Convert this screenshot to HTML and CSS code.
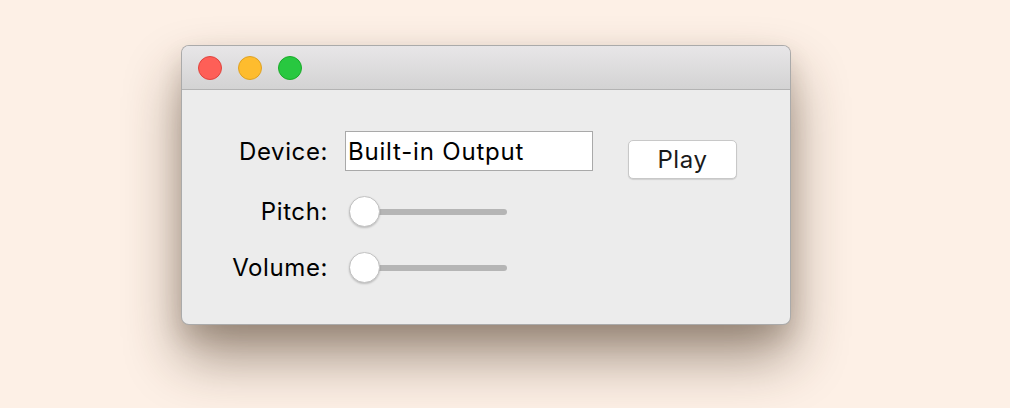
FILE: index.html
```html
<!DOCTYPE html>
<html>
<head>
<meta charset="utf-8">
<link rel="stylesheet" href="styles.css">
</head>
<body>
<div class="window">
  <div class="titlebar">
    <span class="light red"></span>
    <span class="light yellow"></span>
    <span class="light green"></span>
  </div>
  <div class="content">
    <div class="form">
      <label class="label">Device:</label>
      <div class="field">Built-in Output</div>
      <button class="btn">Play</button>
      <label class="label">Pitch:</label>
      <div class="slider"><span class="track"></span><span class="thumb"></span></div>
      <span></span>
      <label class="label">Volume:</label>
      <div class="slider"><span class="track"></span><span class="thumb"></span></div>
      <span></span>
    </div>
  </div>
</div>
</body>
</html>
```
FILE: styles.css
```css
html, body { margin: 0; padding: 0; }
body {
  background: #fdf0e6;
  width: 1010px;
  height: 408px;
  overflow: hidden;
  padding: 45px 0 0 181px;
  box-sizing: border-box;
  font-family: "Inter", "Roboto", "Liberation Sans", sans-serif;
}
.window {
  width: 610px;
  height: 280px;
  border-radius: 8px;
  background: #ececec;
  box-sizing: border-box;
  border: 1px solid rgba(0,0,0,0.28);
  box-shadow: 0 32px 55px rgba(60,40,20,0.48), 0 12px 25px rgba(60,40,20,0.14);
  overflow: hidden;
  display: flex;
  flex-direction: column;
}
.titlebar {
  height: 43px;
  flex: none;
  background: linear-gradient(#e8e6e8, #d3d3d3);
  border-bottom: 1px solid #b3b3b3;
  display: flex;
  align-items: center;
  gap: 16px;
  padding: 0 0 0 16px;
}
.light {
  width: 24px;
  height: 24px;
  border-radius: 50%;
  box-sizing: border-box;
}
.red { background: #fe5f57; border: 1px solid #e0443e; }
.yellow { background: #febc2e; border: 1px solid #dea123; }
.green { background: #28c840; border: 1px solid #1aab29; }
.content {
  padding: 41px 0 0 39px;
}
.form {
  display: grid;
  grid-template-columns: 106px 248px auto;
  column-gap: 18px;
  row-gap: 25px;
  align-items: center;
}
.label {
  justify-self: end;
  font-size: 24px;
  letter-spacing: 0.6px;
  margin-right: -1px;
  color: #000;
}
.field {
  height: 40px;
  box-sizing: border-box;
  background: #fff;
  border: 1px solid #a9a9a9;
  font-size: 24px;
  letter-spacing: 0.8px;
  line-height: 40px;
  padding-left: 2px;
  color: #000;
}
.btn {
  justify-self: start;
  margin: 8px 0 -8px 17px;
  width: 109px;
  height: 39px;
  background: #fff;
  border: 1px solid #c8c8c8;
  border-radius: 5px;
  box-shadow: 0 1px 1px rgba(0,0,0,0.12);
  font-family: inherit;
  font-size: 24px;
  letter-spacing: 0.6px;
  color: #1a1a1a;
  padding: 0;
}
.slider {
  position: relative;
  margin-left: 4px;
  width: 158px;
  height: 31px;
  display: flex;
  align-items: center;
}
.track {
  width: 100%;
  height: 6px;
  border-radius: 3px;
  background: #b5b5b5;
}
.thumb {
  position: absolute;
  left: 0;
  top: 0;
  width: 31px;
  height: 31px;
  box-sizing: border-box;
  border-radius: 50%;
  background: #fff;
  border: 1px solid #c2c2c2;
  box-shadow: 0 1px 2px rgba(0,0,0,0.2);
}
```
